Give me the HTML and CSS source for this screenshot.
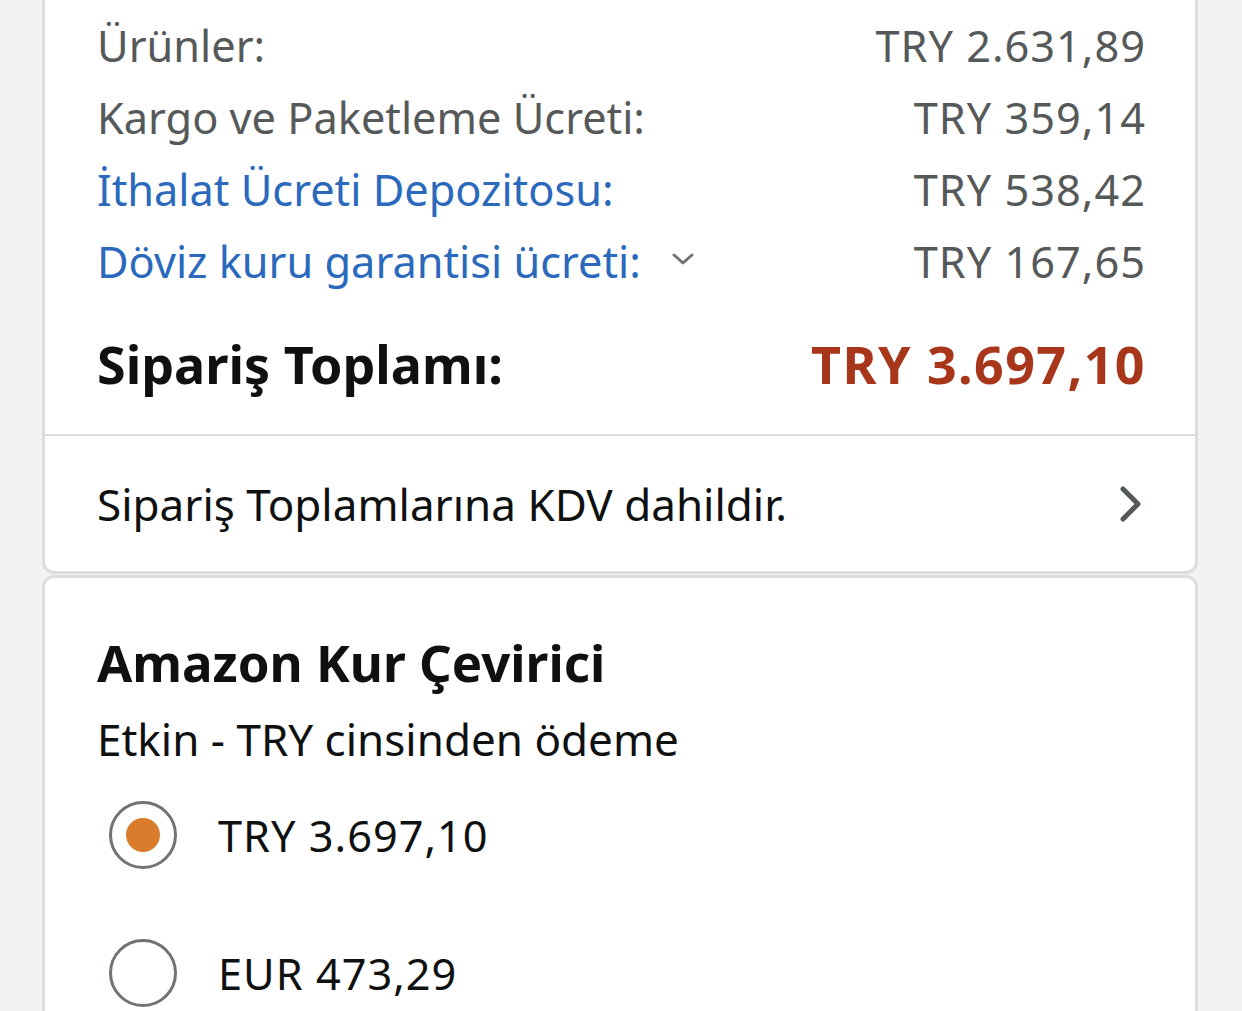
FILE: index.html
```html
<!DOCTYPE html>
<html lang="tr">
<head>
<meta charset="utf-8">
<link rel="stylesheet" href="styles.css">
</head>
<body>
<div class="page">
  <section class="card card-summary">
    <div class="lines">
      <div class="row"><span class="label">Ürünler:</span><span class="value">TRY 2.631,89</span></div>
      <div class="row"><span class="label">Kargo ve Paketleme Ücreti:</span><span class="value">TRY 359,14</span></div>
      <div class="row"><span class="label link">İthalat Ücreti Depozitosu:</span><span class="value">TRY 538,42</span></div>
      <div class="row"><span class="label link with-caret">Döviz kuru garantisi ücreti:<svg class="caret" viewBox="0 0 22 12" width="22" height="12"><path d="M2 2 L11 10 L20 2" fill="none" stroke="#6f7373" stroke-width="3" stroke-linecap="round" stroke-linejoin="round"/></svg></span><span class="value">TRY 167,65</span></div>
      <div class="row total"><span class="total-label">Sipariş Toplamı:</span><span class="total-value">TRY 3.697,10</span></div>
    </div>
    <div class="vat">
      <span>Sipariş Toplamlarına KDV dahildir.</span>
      <svg class="chev" viewBox="0 0 26 40" width="26" height="40"><path d="M5 5 L20 20 L5 35" fill="none" stroke="#565959" stroke-width="5" stroke-linecap="round" stroke-linejoin="round"/></svg>
    </div>
  </section>
  <section class="card card-fx">
    <h2 class="fx-title">Amazon Kur Çevirici</h2>
    <p class="fx-sub">Etkin - TRY cinsinden ödeme</p>
    <div class="option"><span class="radio checked"></span><span class="opt-text">TRY 3.697,10</span></div>
    <div class="option"><span class="radio"></span><span class="opt-text">EUR 473,29</span></div>
  </section>
</div>
</body>
</html>
```
FILE: styles.css
```css
html, body {
  margin: 0;
  padding: 0;
  background: #f2f2f2;
  font-family: "Noto Sans", "Open Sans", sans-serif;
  color: #0f1111;
  overflow: hidden;
}
.page {
  height: 1011px;
  padding: 0 44px 0 42px;
  display: flex;
  flex-direction: column;
  gap: 1px;
}
.card {
  background: #fff;
  border: 3px solid #dddddd;
  border-radius: 12px;
}
.card-summary {
  margin-top: -20px;
  border-top-left-radius: 0;
  border-top-right-radius: 0;
}
.lines {
  padding: 26px 49px 35px 52px;
  border-bottom: 2px solid #dddddd;
}
.row {
  display: flex;
  justify-content: space-between;
  align-items: center;
  height: 72px;
  font-size: 43.3px;
}
.label { color: #565959; }
.value { color: #565959; letter-spacing: 1px; }
.link { color: #2a69bb; }
.with-caret { display: flex; align-items: center; }
.caret { margin-left: 31px; margin-top: -4px; }
.row.total {
  margin-top: 30px;
}
.total-label {
  font-size: 52px;
  font-weight: 700;
  color: #0f1111;
}
.total-value {
  font-size: 52px;
  font-weight: 700;
  letter-spacing: 1.4px;
  color: #a8361b;
}
.vat {
  height: 135px;
  display: flex;
  align-items: center;
  justify-content: space-between;
  padding: 0 51px 0 52px;
  font-size: 44px;
  color: #0f1111;
}
.card-fx {
  flex: 1;
  padding: 46px 52px 0 52px;
}
.fx-title {
  margin: 0;
  font-size: 51px;
  font-weight: 700;
  line-height: 76px;
}
.fx-sub {
  margin: 12px 0 0 0;
  font-size: 44px;
  line-height: 54px;
}
.option {
  display: flex;
  align-items: center;
  height: 138px;
  font-size: 43.3px;
}
.opt-text { letter-spacing: 1px; }
.radio {
  box-sizing: border-box;
  flex: none;
  width: 68px;
  height: 68px;
  border: 3px solid #6f7373;
  border-radius: 50%;
  margin-left: 12px;
  margin-right: 41px;
  display: flex;
  align-items: center;
  justify-content: center;
}
.radio.checked::after {
  content: "";
  width: 34px;
  height: 34px;
  border-radius: 50%;
  background: #d97c2c;
}
```
